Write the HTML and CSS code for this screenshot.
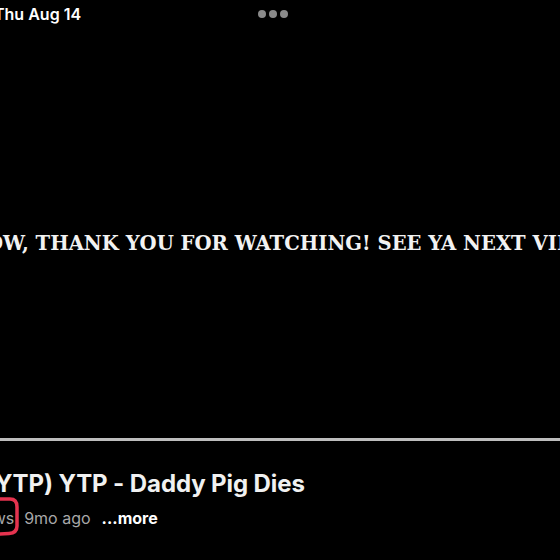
FILE: index.html
```html
<!DOCTYPE html>
<html lang="en">
<head>
    <meta charset="UTF-8">
    <title>Daddy Pig Dies</title>
    <link rel="stylesheet" href="styles.css">
</head>
<body>
    <div class="pantalla">
        <div class="barra">
            <span class="fecha">Thu Aug 14</span>
            <span class="puntos"><i></i><i></i><i></i></span>
        </div>

        <div class="video">
            <p class="subtitulo">NOW, THANK YOU FOR WATCHING! SEE YA NEXT VIDEO!</p>
        </div>

        <div class="progreso"></div>

        <div class="info">
            <h1 class="titulo">(YTP) YTP - Daddy Pig Dies</h1>
            <p class="meta">
                <span class="vistas">3.4K views</span>
                <span class="fechaVideo">9mo ago</span>
                <span class="mas">...more</span>
            </p>
            <svg class="marca" width="24" height="44" viewBox="0 0 24 44">
                <path d="M0 3 L10 3 Q17 3 17 11 L17 30 Q17 37 9 37.5 L0 38" fill="none" stroke="#e5334f" stroke-width="3.5" stroke-linecap="round"/>
            </svg>
        </div>
    </div>
</body>
</html>
```

FILE: styles.css
```css
body {
    margin: 0;
    background-color: #000;
    font-family: Inter, "Noto Sans", sans-serif;
    color: #fff;
    overflow: hidden;
}

p {
    margin: 0;
    padding: 0;
}

.pantalla {
    width: 560px;
    height: 560px;
    overflow: hidden;
}

.barra {
    display: flex;
    align-items: center;
    height: 28px;
}

.fecha {
    margin-left: -6px;
    width: 264px;
    font-size: 16px;
    font-weight: 600;
    color: #fff;
}

.puntos {
    display: flex;
    gap: 3px;
}

.puntos i {
    width: 8px;
    height: 8px;
    border-radius: 50%;
    background-color: #8a8a8a;
}

.video {
    height: 410px;
    display: flex;
    align-items: center;
    overflow: hidden;
}

.subtitulo {
    white-space: nowrap;
    margin-left: -32px;
    margin-top: 20px;
    font-family: "DejaVu Serif", serif;
    font-weight: bold;
    font-size: 19.6px;
    color: #f2f2f2;
}

.progreso {
    height: 3px;
    background-color: #bdbdbd;
}

.info {
    position: relative;
    padding-top: 28px;
}

.titulo {
    margin: 0 0 0 -14px;
    white-space: nowrap;
    font-size: 24px;
    font-weight: 700;
    letter-spacing: -0.1px;
    color: #f1f1f1;
    line-height: 30px;
}

.meta {
    margin-top: 9px;
    margin-left: -69px;
    display: flex;
    gap: 10px;
    font-size: 16px;
    line-height: 20px;
    white-space: nowrap;
}

.vistas,
.fechaVideo {
    color: #a8a8a8;
}

.mas {
    font-weight: 700;
    color: #fff;
    margin-left: 1px;
}

.marca {
    position: absolute;
    left: 0;
    top: 55px;
}
```
